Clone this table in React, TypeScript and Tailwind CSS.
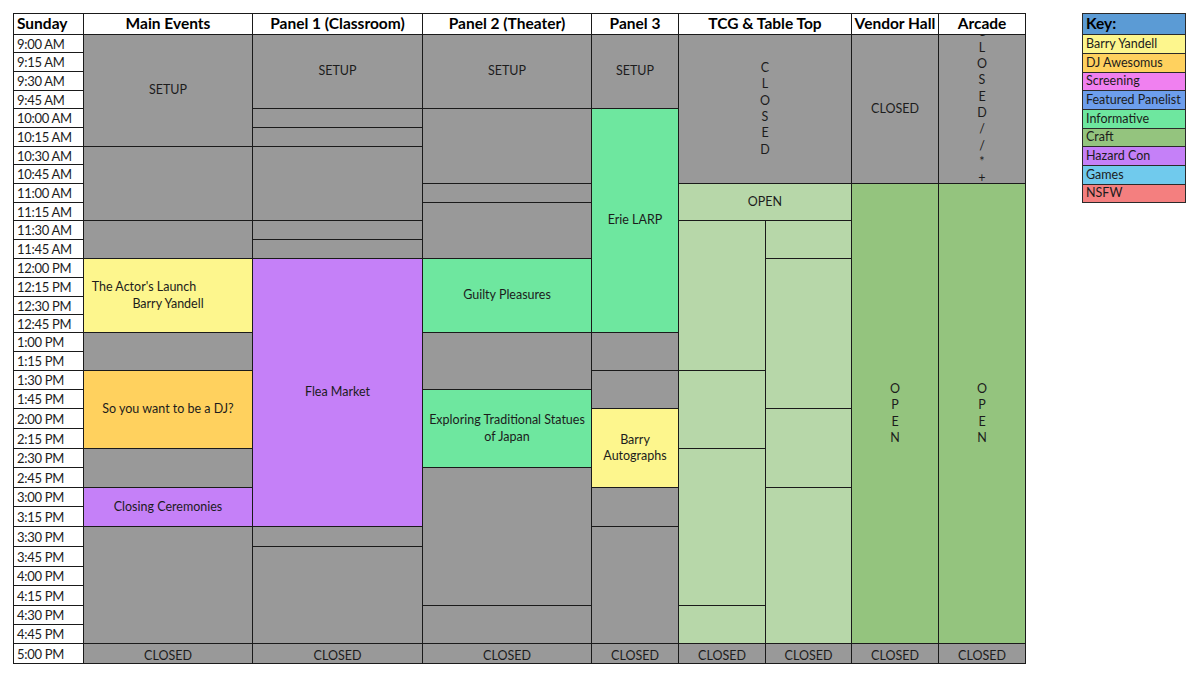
type Cell = {
  span: string;
  bg: string;
  text?: string;
  lines?: string[];
  vertical?: string;
  shift?: string;
  custom?: "actor";
};

type Column = {
  title: string;
  width: string;
  cells: Cell[];
};

const ROWS =
  "grid grid-rows-[20px_17px_18px_18px_17px_18px_18px_17px_18px_18px_17px_18px_18px_18px_18px_17px_17px_18px_18px_18px_18px_19px_19px_18px_19px_18px_19px_19px_19px_18px_19px_18px_18px_19px] gap-y-px";

const GRAY = "bg-[#999999]";
const YELLOW = "bg-[#fdf68d]";
const ORANGE = "bg-[#ffd15e]";
const PURPLE = "bg-[#c580f8]";
const GREEN = "bg-[#6ee79f]";
const LIGHT = "bg-[#b7d7a9]";
const CRAFT = "bg-[#94c47e]";

// bottom row sits a little low, like the sheet's bottom alignment
const closedRow: Cell = { span: "row-span-1", bg: GRAY, text: "CLOSED", shift: "translate-y-[3px]" };

const times = [
  "9:00 AM", "9:15 AM", "9:30 AM", "9:45 AM", "10:00 AM", "10:15 AM", "10:30 AM", "10:45 AM",
  "11:00 AM", "11:15 AM", "11:30 AM", "11:45 AM", "12:00 PM", "12:15 PM", "12:30 PM", "12:45 PM",
  "1:00 PM", "1:15 PM", "1:30 PM", "1:45 PM", "2:00 PM", "2:15 PM", "2:30 PM", "2:45 PM",
  "3:00 PM", "3:15 PM", "3:30 PM", "3:45 PM", "4:00 PM", "4:15 PM", "4:30 PM", "4:45 PM", "5:00 PM",
];

const columns: Column[] = [
  {
    title: "Main Events",
    width: "w-[168px]",
    cells: [
      { span: "row-span-6", bg: GRAY, text: "SETUP" },
      { span: "row-span-4", bg: GRAY },
      { span: "row-span-2", bg: GRAY },
      { span: "row-span-4", bg: YELLOW, custom: "actor" },
      { span: "row-span-2", bg: GRAY },
      { span: "row-span-4", bg: ORANGE, text: "So you want to be a DJ?" },
      { span: "row-span-2", bg: GRAY },
      { span: "row-span-2", bg: PURPLE, text: "Closing Ceremonies" },
      { span: "row-span-6", bg: GRAY },
      closedRow,
    ],
  },
  {
    title: "Panel 1 (Classroom)",
    width: "w-[169px]",
    cells: [
      { span: "row-span-4", bg: GRAY, text: "SETUP" },
      { span: "row-span-1", bg: GRAY },
      { span: "row-span-1", bg: GRAY },
      { span: "row-span-4", bg: GRAY },
      { span: "row-span-1", bg: GRAY },
      { span: "row-span-1", bg: GRAY },
      { span: "row-span-14", bg: PURPLE, text: "Flea Market" },
      { span: "row-span-1", bg: GRAY },
      { span: "row-span-5", bg: GRAY },
      closedRow,
    ],
  },
  {
    title: "Panel 2 (Theater)",
    width: "w-[168px]",
    cells: [
      { span: "row-span-4", bg: GRAY, text: "SETUP" },
      { span: "row-span-4", bg: GRAY },
      { span: "row-span-1", bg: GRAY },
      { span: "row-span-3", bg: GRAY },
      { span: "row-span-4", bg: GREEN, text: "Guilty Pleasures" },
      { span: "row-span-3", bg: GRAY },
      { span: "row-span-4", bg: GREEN, lines: ["Exploring Traditional Statues", "of Japan"] },
      { span: "row-span-7", bg: GRAY },
      { span: "row-span-2", bg: GRAY },
      closedRow,
    ],
  },
  {
    title: "Panel 3",
    width: "w-[86px]",
    cells: [
      { span: "row-span-4", bg: GRAY, text: "SETUP" },
      { span: "row-span-12", bg: GREEN, text: "Erie LARP" },
      { span: "row-span-2", bg: GRAY },
      { span: "row-span-2", bg: GRAY },
      { span: "row-span-4", bg: YELLOW, lines: ["Barry", "Autographs"] },
      { span: "row-span-2", bg: GRAY },
      { span: "row-span-6", bg: GRAY },
      closedRow,
    ],
  },
];

const tcgCells: Cell[] = [
  { span: "col-span-2 row-start-2 row-span-8", bg: GRAY, vertical: "CLOSED" },
  { span: "col-span-2 row-start-10 row-span-2", bg: LIGHT, text: "OPEN" },
  { span: "col-start-1 row-start-12 row-span-8", bg: LIGHT },
  { span: "col-start-1 row-start-20 row-span-4", bg: LIGHT },
  { span: "col-start-1 row-start-24 row-span-8", bg: LIGHT },
  { span: "col-start-1 row-start-32 row-span-2", bg: LIGHT },
  { span: "col-start-1 row-start-34 row-span-1", bg: GRAY, text: "CLOSED", shift: "translate-y-[3px]" },
  { span: "col-start-2 row-start-12 row-span-2", bg: LIGHT },
  { span: "col-start-2 row-start-14 row-span-8", bg: LIGHT },
  { span: "col-start-2 row-start-22 row-span-4", bg: LIGHT },
  { span: "col-start-2 row-start-26 row-span-8", bg: LIGHT },
  { span: "col-start-2 row-start-34 row-span-1", bg: GRAY, text: "CLOSED", shift: "translate-y-[3px]" },
];

const halls: Column[] = [
  {
    title: "Vendor Hall",
    width: "w-[86px]",
    cells: [
      { span: "row-span-8", bg: GRAY, text: "CLOSED" },
      { span: "row-span-24", bg: CRAFT, vertical: "OPEN" },
      closedRow,
    ],
  },
  {
    title: "Arcade",
    width: "w-[86px]",
    cells: [
      { span: "row-span-8", bg: GRAY, vertical: "CLOSED//*+", shift: "-translate-y-[4px]" },
      { span: "row-span-24", bg: CRAFT, vertical: "OPEN" },
      closedRow,
    ],
  },
];

const key = [
  { label: "Barry Yandell", bg: "bg-[#fdf68d]" },
  { label: "DJ Awesomus", bg: "bg-[#ffd15e]" },
  { label: "Screening", bg: "bg-[#f080f0]" },
  { label: "Featured Panelist", bg: "bg-[#6d9eec]" },
  { label: "Informative", bg: "bg-[#6ee79f]" },
  { label: "Craft", bg: "bg-[#94c47e]" },
  { label: "Hazard Con", bg: "bg-[#c580f8]" },
  { label: "Games", bg: "bg-[#70caed]" },
  { label: "NSFW", bg: "bg-[#f47f7f]" },
];

const ScheduleCell = ({ cell }: { cell: Cell }) => {
  return (
    <div
      className={`${cell.span} ${cell.bg} flex flex-col items-center justify-center overflow-hidden text-center text-[12.5px] leading-[16.5px] text-[#1c1c1c]`}
    >
      {cell.text && <span className={cell.shift}>{cell.text}</span>}
      {cell.lines && cell.lines.map((l) => <span key={l}>{l}</span>)}
      {cell.custom === "actor" && (
        <>
          <span className="pr-[48px]">The Actor's Launch</span>
          <span>Barry Yandell</span>
        </>
      )}
      {cell.vertical && (
        <div className={`flex shrink-0 flex-col items-center leading-[16.3px] ${cell.shift ?? ""}`}>
          {cell.vertical.split("").map((ch, i) => (
            <span key={i}>{ch}</span>
          ))}
        </div>
      )}
    </div>
  );
};

const Header = ({ title }: { title: string }) => (
  <div className="flex items-center justify-center bg-white text-[15.5px] font-bold leading-none text-black">
    {title}
  </div>
);

export default function App() {
  return (
    <div className="flex min-h-screen items-start bg-white pl-[13px] pt-[13px] font-['Lato',sans-serif]">
      <div className="flex gap-px bg-[#1a1a1a] p-px">
        <div className={`${ROWS} w-[69px]`}>
          <div className="flex items-center bg-white pl-[3px] text-[15.5px] font-bold leading-none text-black">
            Sunday
          </div>
          {times.map((t) => (
            <div
              key={t}
              className="flex items-center bg-white pl-[3px] pt-px text-[13px] leading-none tracking-[-0.3px] text-[#1c1c1c]"
            >
              {t}
            </div>
          ))}
        </div>

        {columns.map((col) => (
          <div key={col.title} className={`${ROWS} ${col.width}`}>
            <Header title={col.title} />
            {col.cells.map((c, i) => (
              <ScheduleCell key={i} cell={c} />
            ))}
          </div>
        ))}

        <div className={`${ROWS} w-[172px] grid-cols-[86px_85px] gap-x-px`}>
          <div className="col-span-2 row-start-1 flex items-center justify-center bg-white text-[15.5px] font-bold leading-none text-black">
            TCG &amp; Table Top
          </div>
          {tcgCells.map((c, i) => (
            <ScheduleCell key={i} cell={c} />
          ))}
        </div>

        {halls.map((col) => (
          <div key={col.title} className={`${ROWS} ${col.width}`}>
            <Header title={col.title} />
            {col.cells.map((c, i) => (
              <ScheduleCell key={i} cell={c} />
            ))}
          </div>
        ))}
      </div>

      <div className="ml-[56px] grid w-[104px] grid-rows-[20px_18px_18px_17px_18px_18px_17px_18px_18px_17px] gap-y-px bg-[#2a2a2a] p-px">
        <div className="flex items-center bg-[#5b9bd5] pl-[3px] text-[15.5px] font-bold leading-none text-black">
          Key:
        </div>
        {key.map((k) => (
          <div key={k.label} className={`${k.bg} flex items-center pl-[3px] text-[12.5px] leading-none text-[#1c1c1c]`}>
            {k.label}
          </div>
        ))}
      </div>
    </div>
  );
}
